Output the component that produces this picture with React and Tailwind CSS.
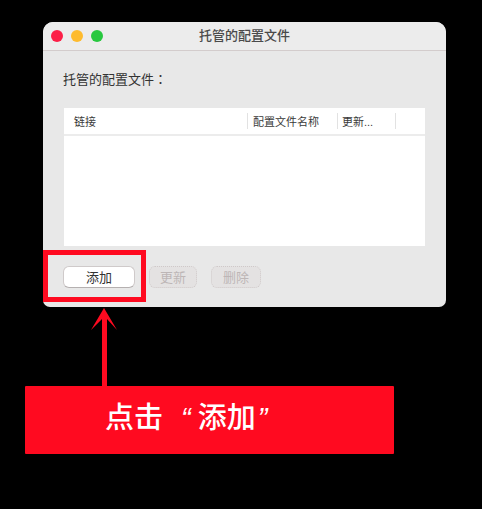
function Light({ color }) {
  return <span className={`w-3 h-3 rounded-full ${color}`} />
}

function HeadCell({ className, children }) {
  return (
    <div className={`h-4 flex items-center border-r border-[#e2e2e2] ${className}`}>
      <span className="text-[11px] text-[#3a3a3a] leading-none pt-[3px]">{children}</span>
    </div>
  )
}

export default function App() {
  return (
    <div className="relative w-[482px] h-[509px] bg-black overflow-hidden font-['Liberation_Sans','Noto_Sans_CJK_SC',sans-serif]">
      {/* window */}
      <div className="w-[403px] h-[285px] ml-[43px] translate-y-[22px] bg-[#e8e8e8] rounded-t-[10px] rounded-b-[7px] flex flex-col overflow-hidden">
        <div className="h-[29px] shrink-0 bg-[#ececec] border-b border-[#d3cccc] relative flex items-center justify-center">
          <div className="absolute left-[8px] top-[8px] flex gap-2">
            <Light color="bg-[#fc1f47]" />
            <Light color="bg-[#febb2e]" />
            <Light color="bg-[#28c83f]" />
          </div>
          <span className="text-[13px] font-medium text-[#4a4a4a]">托管的配置文件</span>
        </div>

        <div className="flex-1 flex flex-col px-[21px]">
          <p className="mt-[19px] h-[18px] -ml-px text-[13px] leading-[18px] text-[#333]">
            托管的配置文件<span className="font-['Noto_Sans_CJK_TC',sans-serif]">：</span>
          </p>

          <div className="mt-[20px] h-[138px] bg-white flex flex-col">
            <div className="h-[28px] shrink-0 border-b-2 border-[#ececec] flex items-center">
              <HeadCell className="w-[184px] pl-[10px]">链接</HeadCell>
              <HeadCell className="w-[90px] pl-[5px]">配置文件名称</HeadCell>
              <HeadCell className="w-[58px] pl-[4px]">更新...</HeadCell>
            </div>
          </div>

          <div className="mt-[20px] flex items-start -ml-px">
            <button className="w-[72px] h-[22px] bg-white rounded-[6px] border border-[#cfcaca] border-b-[#b5b0b0] text-[13px] leading-none text-[#333]">添加</button>
            <button className="ml-[14px] w-[48px] h-[22px] bg-[#e4e2e2] rounded-[6px] border border-dotted border-[#cfc9c9] text-[13px] leading-none text-[#bdb6b6]">更新</button>
            <button className="ml-[14px] w-[50px] h-[22px] bg-[#e4e2e2] rounded-[6px] border border-dotted border-[#cfc9c9] text-[13px] leading-none text-[#bdb6b6]">删除</button>
          </div>
        </div>
      </div>

      {/* red highlight over the add button */}
      <div className="absolute left-[43px] top-[250px] w-[103px] h-[52px] border-[5px] border-[#ff0a20]" />

      {/* arrow */}
      <svg className="absolute left-[90px] top-[306px]" width="30" height="82" viewBox="0 0 30 82">
        <path d="M14 2 L27 24 L17 13 L17 81 L12 81 L12 13 L1 24 Z" fill="#ff0a20" />
      </svg>

      {/* callout */}
      <div className="absolute left-[25px] top-[386px] w-[369px] h-[68px] bg-[#ff0a20] rounded-[1px] flex items-center pl-[80px] pb-[4px]">
        <span className="text-[29px] font-medium leading-none text-white whitespace-nowrap">
          点击<span className="ml-[18px] italic">“</span><span className="ml-[7px]">添加</span><span className="ml-[2px] italic">”</span>
        </span>
      </div>
    </div>
  )
}
